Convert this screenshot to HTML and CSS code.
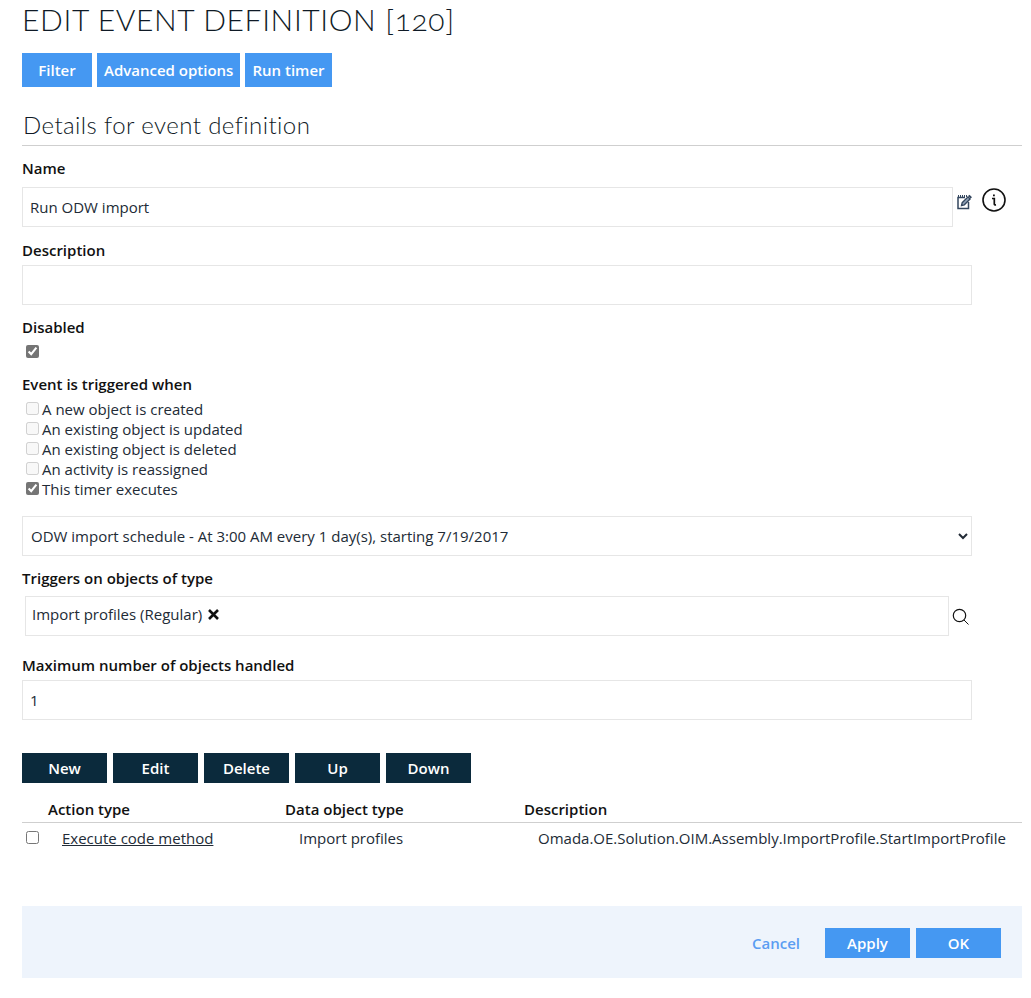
FILE: index.html
```html
<!DOCTYPE html>
<html lang="en">
<head>
<meta charset="utf-8">
<title>Edit event definition</title>
<link rel="stylesheet" href="styles.css">
</head>
<body>
<main class="page">
  <h1 class="title">EDIT EVENT DEFINITION [120]</h1>
  <div class="toolbar">
    <button class="btn btn-blue btn-filter">Filter</button>
    <button class="btn btn-blue">Advanced options</button>
    <button class="btn btn-blue">Run timer</button>
  </div>
  <h2 class="section">Details for event definition</h2>

  <label class="label label-name">Name</label>
  <div class="name-row">
    <input class="field field-name" type="text" value="Run ODW import">
    <svg class="icon-edit" width="16" height="16" viewBox="0 0 16 16" fill="none" stroke="#33465e">
      <path d="M12.5 8V14.5H2V3.5H9" stroke-width="1.5"/>
      <path d="M2.5 1V3.5M4.5 1V3.5M6.5 1V3.5M8.5 1V3.5M10.5 1V3" stroke-width="1"/>
      <path d="M5.5 11.5l.7-2.8L12 2.9l2.1 2.1-5.8 5.8z" stroke-width="1.3" fill="#8fa0b5"/>
      <path d="M12.8 1.4l2.5 2.5" stroke-width="2"/>
    </svg>
    <svg class="icon-info" width="24" height="24" viewBox="0 0 24 24" fill="none" stroke="#111">
      <circle cx="12" cy="12" r="11" stroke-width="1.6"/>
      <path d="M10 10.5h2.3V16c0 .7.5 1 1.7.8" stroke-width="1.7"/>
      <path d="M11 6.5h1.8v1.8H11z" fill="#111" stroke="none"/>
    </svg>
  </div>

  <label class="label label-desc">Description</label>
  <input class="field field-wide" type="text">

  <label class="label label-disabled">Disabled</label>
  <div class="single-check"><input type="checkbox" class="check check-on" checked></div>

  <label class="label label-event">Event is triggered when</label>
  <ul class="check-list">
    <li><input type="checkbox" class="check" disabled>A new object is created</li>
    <li><input type="checkbox" class="check" disabled>An existing object is updated</li>
    <li><input type="checkbox" class="check" disabled>An existing object is deleted</li>
    <li><input type="checkbox" class="check" disabled>An activity is reassigned</li>
    <li><input type="checkbox" class="check check-on" checked>This timer executes</li>
  </ul>

  <select class="field field-wide field-select">
    <option>ODW import schedule - At 3:00 AM every 1 day(s), starting 7/19/2017</option>
  </select>

  <label class="label label-triggers">Triggers on objects of type</label>
  <div class="picker-row">
    <div class="picker">
      <span class="tag">Import profiles (Regular)</span>
      <svg class="icon-x" width="11" height="11" viewBox="0 0 11 11" stroke="#111" stroke-width="2.6"><path d="M1 1l9 9M10 1l-9 9"/></svg>
    </div>
    <svg class="icon-search" width="18" height="18" viewBox="0 0 18 18" fill="none" stroke="#111">
      <circle cx="7.5" cy="7.5" r="6.2" stroke-width="1.2"/>
      <path d="M12 12l4.5 4.5" stroke-width="1"/>
    </svg>
  </div>

  <label class="label label-max">Maximum number of objects handled</label>
  <input class="field field-wide" type="text" value="1">

  <div class="actions">
    <button class="btn btn-dark">New</button>
    <button class="btn btn-dark">Edit</button>
    <button class="btn btn-dark">Delete</button>
    <button class="btn btn-dark">Up</button>
    <button class="btn btn-dark">Down</button>
  </div>

  <div class="grid grid-head">
    <span></span>
    <span>Action type</span>
    <span>Data object type</span>
    <span>Description</span>
  </div>
  <div class="grid grid-row">
    <span class="cell-check"><input type="checkbox" class="check check-row"></span>
    <a class="cell link" href="#">Execute code method</a>
    <span class="cell">Import profiles</span>
    <span class="cell">Omada.OE.Solution.OIM.Assembly.ImportProfile.StartImportProfile</span>
  </div>

  <footer class="footer">
    <a class="cancel" href="#">Cancel</a>
    <button class="btn btn-blue btn-foot">Apply</button>
    <button class="btn btn-blue btn-foot">OK</button>
  </footer>
</main>
</body>
</html>
```
FILE: styles.css
```css
* { box-sizing: border-box; }
html, body { margin: 0; padding: 0; background: #fff; }
body {
  font-family: "Open Sans", "Noto Sans", sans-serif;
  font-size: 15px;
  color: #222b36;
  overflow: hidden;
}
.page { width: 1022px; height: 998px; padding-left: 22px; }
.title {
  margin: 0;
  padding-top: 1px;
  height: 53px;
  font-family: Lato, "Open Sans", sans-serif;
  font-weight: 300;
  font-size: 30px;
  line-height: 37px;
  letter-spacing: 0.62px;
  font-variant-numeric: oldstyle-nums;
  color: #0f1a26;
}
.toolbar { display: flex; gap: 5px; }
.btn {
  border: 0;
  border-radius: 0;
  font-family: "Open Sans", sans-serif;
  font-weight: 600;
  font-size: 15px;
  color: #fff;
  padding: 0;
}
.btn-blue { background: #4598f2; height: 34px; padding: 0 7px; }
.btn-filter { width: 70px; }
.section {
  margin: 20px 0 0;
  height: 39px;
  border-bottom: 1px solid #cfcfcf;
  padding: 3px 0 0 1px;
  font-family: Lato, "Open Sans", sans-serif;
  font-weight: 300;
  font-size: 24px;
  line-height: 30px;
  letter-spacing: 0.42px;
  color: #0f1a26;
}
.label {
  display: block;
  font-weight: 600;
  font-size: 15px;
  line-height: 20px;
  color: #111;
}
.label-name { margin-top: 12px; height: 29px; }
.field {
  display: block;
  height: 40px;
  border: 1px solid #e6e6e6;
  background: #fff;
  padding: 0 7px;
  font-family: "Open Sans", sans-serif;
  font-size: 15px;
  color: #222b36;
  border-radius: 0;
  outline: 0;
}
.name-row { display: flex; align-items: flex-start; }
.field-name { width: 931px; }
.icon-edit { margin: 7px 0 0 3px; }
.icon-info { margin: 1px 0 0 10px; }
.field-wide { width: 950px; }
.label-desc { margin-top: 13px; height: 25px; }
.label-disabled { margin-top: 12px; height: 20px; }
.single-check { height: 28px; padding: 8px 0 0 4px; display: flex; align-items: flex-start; }
.check { margin: 0; width: 13px; height: 13px; flex: none; }
.check-on { accent-color: #757575; }
.label-event { margin-top: 9px; height: 25px; }
.check-list { list-style: none; margin: 0; padding: 0 0 0 4px; height: 117px; }
.check-list li { display: flex; align-items: flex-start; height: 20px; line-height: 20px; gap: 3px; color: #222b36; }
.check-list .check { margin-top: 3px; }
.field-select { padding: 0 4px; }
.label-triggers { margin-top: 12px; height: 28px; }
.picker-row { display: flex; align-items: center; padding-left: 3px; }
.picker {
  width: 924px;
  height: 40px;
  border: 1px solid #e6e6e6;
  display: flex;
  align-items: flex-start;
  padding: 7px 0 0 6px;
  gap: 6px;
}
.tag { line-height: 20px; }
.icon-x { margin-top: 5px; }
.icon-search { margin-left: 3px; margin-top: 1px; }
.label-max { margin-top: 19px; height: 25px; }
.actions { display: flex; gap: 6px; margin-top: 33px; }
.btn-dark { width: 85px; height: 30px; background: #0b2a3c; }
.grid { display: grid; grid-template-columns: 26px 237px 239px 1fr; width: 1000px; }
.grid-head {
  margin-top: 16px;
  height: 24px;
  border-bottom: 1px solid #cfcfcf;
  font-weight: 600;
  line-height: 20px;
  color: #111;
}
.grid-row { height: 32px; line-height: 30px; }
.cell-check { display: flex; align-items: flex-start; padding: 8px 0 0 4px; }
.cell { padding-left: 14px; white-space: nowrap; }
.link { color: #222b36; text-decoration: underline; }
.footer {
  margin-top: 51px;
  width: 1000px;
  height: 72px;
  background: #eef4fc;
  display: flex;
  align-items: center;
  justify-content: flex-end;
  padding: 2px 21px 0 0;
  gap: 6px;
}
.btn-foot { width: 85px; height: 30px; }
.cancel {
  color: #5a9df2;
  text-decoration: none;
  font-weight: 600;
  font-size: 15px;
  margin-right: 19px;
}
```
